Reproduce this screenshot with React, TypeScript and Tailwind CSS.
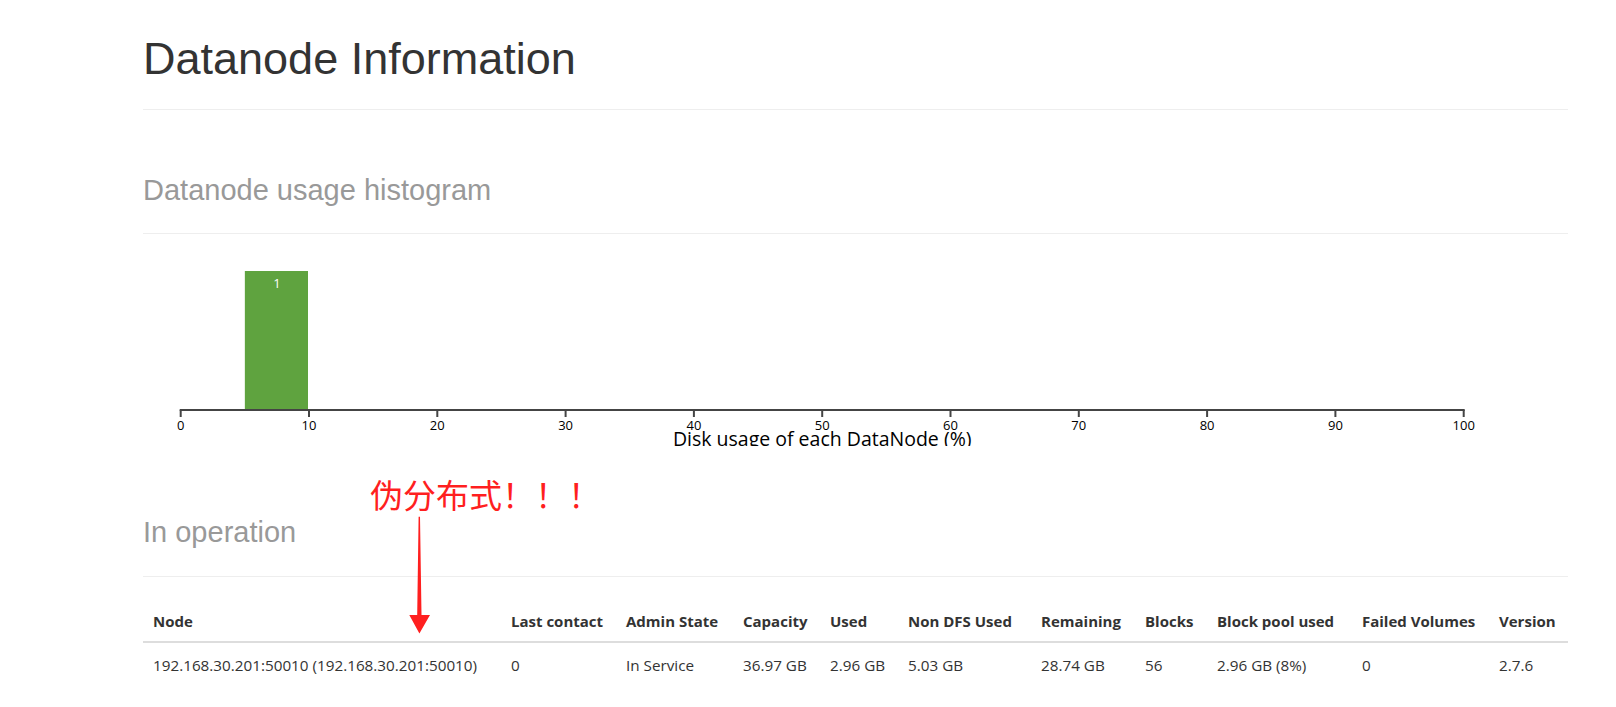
const columns = [
  { label: 'Node', width: 'w-[358px]' },
  { label: 'Last contact', width: 'w-[115px]' },
  { label: 'Admin State', width: 'w-[117px]' },
  { label: 'Capacity', width: 'w-[87px]' },
  { label: 'Used', width: 'w-[78px]' },
  { label: 'Non DFS Used', width: 'w-[133px]' },
  { label: 'Remaining', width: 'w-[104px]' },
  { label: 'Blocks', width: 'w-[72px]' },
  { label: 'Block pool used', width: 'w-[145px]' },
  { label: 'Failed Volumes', width: 'w-[137px]' },
  { label: 'Version', width: 'w-[79px]' },
];

const row = [
  '192.168.30.201:50010 (192.168.30.201:50010)',
  '0',
  'In Service',
  '36.97 GB',
  '2.96 GB',
  '5.03 GB',
  '28.74 GB',
  '56',
  '2.96 GB (8%)',
  '0',
  '2.7.6',
];

const AXIS_X0 = 37.7;
const STEP = 128.3; // px per 10%

function Histogram() {
  const ticks = Array.from({ length: 11 }, (_, i) => i * 10);
  const x = (v: number) => AXIS_X0 + (v / 10) * STEP;

  return (
    <svg width="1425" height="212" className="block">
      {/* bar: 5% - 10%, 1 node */}
      <rect x={x(5)} y={37} width={x(10) - x(5) - 1} height={139} fill="#5FA33F" />
      <text
        x={(x(5) + x(10)) / 2}
        y={54}
        textAnchor="middle"
        fill="#fff"
        fontSize="13"
        fontFamily="'Open Sans', sans-serif"
      >
        1
      </text>

      {/* x axis */}
      <line x1={x(0) - 1} y1={176} x2={x(100) + 1} y2={176} stroke="#444" strokeWidth="2" />
      {ticks.map((t) => (
        <g key={t}>
          <line x1={x(t)} y1={176} x2={x(t)} y2={183} stroke="#444" strokeWidth="2" />
          <text
            x={x(t)}
            y={196}
            textAnchor="middle"
            fill="#000"
            fontSize="13"
            fontFamily="'Open Sans', sans-serif"
          >
            {t}
          </text>
        </g>
      ))}
      {/* the label runs past the svg's bottom edge, as in the page */}
      <text
        x={(x(0) + x(100)) / 2}
        y={211.5}
        textAnchor="middle"
        fill="#000"
        fontSize="19.5"
        fontFamily="'Open Sans', sans-serif"
      >
        Disk usage of each DataNode (%)
      </text>
    </svg>
  );
}

export default function App() {
  return (
    <div className="relative min-h-[707px] bg-white pl-[143px] pr-[48px] text-[#333]">
      {/* Title */}
      <div className="border-b border-[#eee] pt-[34px] pb-[25px]">
        <h1 className="font-['Liberation_Sans',Arial,sans-serif] text-[45px] leading-[50px] text-[#333]">
          Datanode Information
        </h1>
      </div>

      {/* Histogram */}
      <div className="mt-[64px] border-b border-[#eee] pb-[27px]">
        <h3 className="font-['Liberation_Sans',Arial,sans-serif] text-[29px] leading-[32px] text-[#999]">
          Datanode usage histogram
        </h3>
      </div>
      <Histogram />

      {/* In operation */}
      <div className="mt-[70px] border-b border-[#eee] pb-[28px]">
        <h3 className="font-['Liberation_Sans',Arial,sans-serif] text-[29px] leading-[32px] text-[#999]">
          In operation
        </h3>
      </div>

      <table className="mt-[24px] w-full table-fixed border-collapse font-['Open_Sans',sans-serif] text-[15px] text-[#333]">
        <colgroup>
          {columns.map((c) => (
            <col key={c.label} className={c.width} />
          ))}
        </colgroup>
        <thead>
          <tr className="border-b-2 border-[#ddd]">
            {columns.map((c) => (
              <th key={c.label} className="px-[10px] py-[9px] text-left font-bold leading-[22px] whitespace-nowrap">
                {c.label}
              </th>
            ))}
          </tr>
        </thead>
        <tbody>
          <tr>
            {row.map((v, i) => (
              <td key={i} className="px-[10px] py-[11px] text-left text-[15.25px] leading-[22px] whitespace-nowrap">
                {v}
              </td>
            ))}
          </tr>
        </tbody>
      </table>

      {/* annotation */}
      <div className="absolute left-[370px] top-[478px] font-['Noto_Sans_CJK_SC',sans-serif] text-[33px] leading-[33px] text-[#ff1f1f] whitespace-nowrap">
        伪分布式！！！
      </div>
      <svg className="absolute left-[405px] top-[514px]" width="30" height="122">
        <polygon points="13.6,2.7 15,2.7 16.5,101 25,101 14.4,119.5 4.3,101 12.2,101" fill="#ff1f1f" />
      </svg>
    </div>
  );
}
